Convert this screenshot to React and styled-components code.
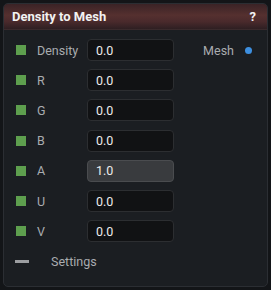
import React from "react";
import styled, { createGlobalStyle } from "styled-components";

const Global = createGlobalStyle`
  html, body { margin: 0; padding: 0; background: #131518; }
  body { font-family: Roboto, "Noto Sans", sans-serif; }
`;

const Panel = styled.div`
  margin: 3px 3px 0 3px;
  width: 265px;
  height: 284px;
  box-sizing: border-box;
  background: #1b1e22;
  border: 1px solid #2b2e33;
  border-radius: 5px;
  display: flex;
  flex-direction: column;
  overflow: hidden;
`;

const Header = styled.div`
  height: 25px;
  flex: none;
  display: flex;
  align-items: center;
  justify-content: space-between;
  padding: 0 11px 0 8px;
  background: linear-gradient(180deg, #3a2326 0%, #55302f 45%, #4a2a2c 70%, #2e1f22 100%);
  border-bottom: 1px solid #3a2a2c;
  color: #f2f2f2;
  font-weight: 700;
  font-size: 13px;
`;

const Body = styled.div`
  display: flex;
  flex-direction: column;
  padding: 5px 0 0 0;
`;

const Row = styled.div`
  height: 30.2px;
  display: flex;
  align-items: center;
  padding-left: 12px;
`;

const Socket = styled.span`
  width: 10px;
  height: 10px;
  background: #5e9f4e;
  flex: none;
`;

const Label = styled.span`
  width: 50px;
  margin-left: 11px;
  color: #a9acb0;
  font-size: 12.5px;
`;

const Field = styled.div`
  width: 87px;
  height: 22px;
  box-sizing: border-box;
  border-radius: 4px;
  border: 1px solid ${(p) => (p.$active ? "#4a4c4f" : "#2c2e31")};
  background: ${(p) => (p.$active ? "#393b3e" : "#111214")};
  color: #ececec;
  font-size: 12.5px;
  display: flex;
  align-items: center;
  padding-left: 8px;
`;

const Output = styled.div`
  display: flex;
  align-items: center;
  margin-left: auto;
  padding-right: 15px;
  color: #a9acb0;
  font-size: 12.5px;
  gap: 11px;
`;

const Dot = styled.span`
  width: 7px;
  height: 7px;
  border-radius: 50%;
  background: #3d8fe0;
`;

const Dash = styled.span`
  width: 14px;
  height: 3px;
  background: #9c9ea1;
  margin-right: 11px;
  margin-left: -1px;
`;

const rows = [
  ["Density", "0.0"],
  ["R", "0.0"],
  ["G", "0.0"],
  ["B", "0.0"],
  ["A", "1.0", true],
  ["U", "0.0"],
  ["V", "0.0"],
];

export default function App() {
  return (
    <>
      <Global />
      <Panel>
        <Header>
          <span>Density to Mesh</span>
          <span>?</span>
        </Header>
        <Body>
          {rows.map(([l, v, a], i) => (
            <Row key={l}>
              <Socket />
              <Label>{l}</Label>
              <Field $active={a}>{v}</Field>
              {i === 0 && (
                <Output>
                  Mesh
                  <Dot />
                </Output>
              )}
            </Row>
          ))}
          <Row>
            <Dash />
            <Label>Settings</Label>
          </Row>
        </Body>
      </Panel>
    </>
  );
}
